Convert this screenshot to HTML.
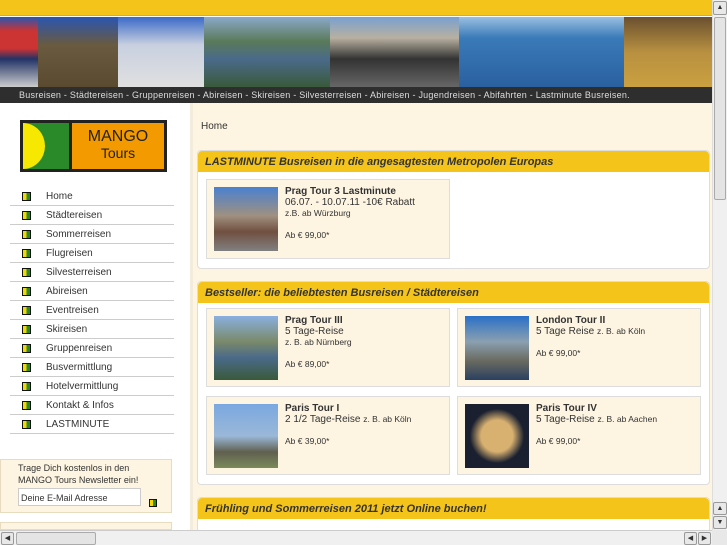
<!DOCTYPE html>
<html><head><meta charset="utf-8"><style>
*{margin:0;padding:0;box-sizing:border-box}
body{width:727px;height:545px;overflow:hidden;position:relative;font-family:"Liberation Sans",sans-serif;background:#fff;color:#333}
.a{position:absolute}
.topbar{left:0;top:0;width:712px;height:16px;background:#f4c41a;border-bottom:1px solid #e0b000}
.banner{left:0;top:17px;width:712px;height:70px;display:flex}
.nav{left:0;top:87px;width:712px;height:16px;background:#2e2e2e;color:#ddd;font-size:9px;line-height:16px;padding-left:19px;white-space:nowrap;letter-spacing:0.24px}
.left{left:0;top:103px;width:190px;height:427px;background:#fff}
.main{left:190px;top:103px;width:522px;height:427px;background:#fdf5e2;border-left:3px solid #f3ebdc}
.logo{left:20px;top:120px;width:147px;height:52px;background:#222;padding:3px}
.menu{left:10px;top:187px;width:164px}
.menu div{height:19px;border-bottom:1px solid #ccc;font-size:10px;line-height:19px;padding-left:36px;position:relative;color:#333}
.menu div:before{content:"";position:absolute;left:12px;top:5px;width:7px;height:7px;background:linear-gradient(90deg,#f4d800 50%,#2a8a2a 50%);border:1px solid #111}
.nl{left:0;top:459px;width:172px;height:54px;background:#fdf5e2;border:1px solid #e8dcc0;font-size:9px;color:#333;padding:2px 0 0 17px;line-height:12px}
.inp{position:absolute;left:17px;top:28px;width:123px;height:18px;border:1px solid #ccc;background:#fff;font-size:9px;padding:3px 2px}
.box{background:#fff;border:1px solid #ddd;border-radius:4px;left:197px;width:513px}
.bh{height:21px;background:#f4c41a;border-radius:4px 4px 0 0;font-weight:bold;font-style:italic;font-size:11px;line-height:22px;padding-left:7px;color:#333}
.item{position:absolute;background:#fdf5e2;border:1px solid #ddd;width:244px}
.item .img{position:absolute;left:7px;top:7px;width:64px;height:64px}
.item .t{position:absolute;left:78px;top:6px;font-size:10px;line-height:11px;width:165px}
.item b{font-size:10px}
.sm{font-size:8.5px}
.vs{left:712px;top:0;width:15px;height:530px;background:#f0f0f0;border-left:1px solid #ddd}
.hs{left:0;top:530px;width:712px;height:15px;background:#f0f0f0;border-top:1px solid #ccc}
.btn{background:#e8e8e8;border:1px solid #999;border-radius:2px;font-size:7px;text-align:center;line-height:12px}
</style></head><body>
<div class="a topbar"></div>
<div class="a banner">
<div style="width:38px;background:linear-gradient(#2a55b0 0,#c33 20%,#c33 45%,#236 60%,#ccc)"></div>
<div style="width:80px;background:linear-gradient(#2a55b0,#6a5a40 40%,#5a4a30)"></div>
<div style="width:86px;background:linear-gradient(#3a6ac8,#c8d0e0 40%,#e0e0e0)"></div>
<div style="width:126px;background:linear-gradient(#8aa8c8,#5a7a5a 35%,#4a6a8a 60%,#3a5a3a)"></div>
<div style="width:129px;background:linear-gradient(#7aa0d0,#b8b0a0 30%,#333 60%,#666)"></div>
<div style="width:165px;background:linear-gradient(#9ac0e0,#3a7ab8 30%,#2a60a0)"></div>
<div style="width:88px;background:linear-gradient(#6a5030,#b89040 50%,#caa040)"></div>
</div>
<div class="a nav">Busreisen - Städtereisen - Gruppenreisen - Abireisen - Skireisen - Silvesterreisen - Abireisen - Jugendreisen - Abifahrten - Lastminute Busreisen.</div>
<div class="a left"></div>
<div class="a main"></div>
<div class="a logo"><div style="display:flex;height:100%"><div style="width:46px;background:#2a8a2a;position:relative;overflow:hidden"><div style="position:absolute;left:-22px;top:0;width:44px;height:46px;border-radius:50%;background:#f6e800"></div></div><div style="width:3px"></div><div style="flex:1;background:#f29a00;color:#222;text-align:center;font-size:16px;line-height:17px;padding-top:5px">MANGO<br><span style="font-size:14px">Tours</span></div></div></div>
<div class="a menu">
<div>Home</div><div>Städtereisen</div><div>Sommerreisen</div><div>Flugreisen</div><div>Silvesterreisen</div><div>Abireisen</div><div>Eventreisen</div><div>Skireisen</div><div>Gruppenreisen</div><div>Busvermittlung</div><div>Hotelvermittlung</div><div>Kontakt &amp; Infos</div><div>LASTMINUTE</div>
</div>
<div class="a nl">Trage Dich kostenlos in den<br>MANGO Tours Newsletter ein!<div class="inp">Deine E-Mail Adresse</div><div style="position:absolute;left:148px;top:39px;width:8px;height:8px;background:linear-gradient(90deg,#f4d800 50%,#2a8a2a 50%);border:1px solid #111"></div></div>
<div class="a" style="left:0;top:522px;width:172px;height:8px;background:#fdf5e2;border:1px solid #e8dcc0"></div>
<div class="a" style="left:201px;top:121px;font-size:10px">Home</div>

<div class="a box" style="top:150px;height:119px"><div class="bh">LASTMINUTE Busreisen in die angesagtesten Metropolen Europas</div>
<div class="item" style="left:8px;top:28px;height:80px"><div class="img" style="background:linear-gradient(#4a80d0,#a09080 45%,#705040 70%,#808080)"></div><div class="t"><b>Prag Tour 3 Lastminute</b><br>06.07. - 10.07.11 -10€ Rabatt<br><span class="sm">z.B. ab Würzburg</span><br><br><span class="sm">Ab € 99,00*</span></div></div></div>

<div class="a box" style="top:281px;height:204px"><div class="bh">Bestseller: die beliebtesten Busreisen / Städtereisen</div>
<div class="item" style="left:8px;top:26px;height:79px"><div class="img" style="background:linear-gradient(#8ab0e0,#7a8a6a 40%,#4a6a8a 65%,#3a5a3a)"></div><div class="t"><b>Prag Tour III</b><br>5 Tage-Reise<br><span class="sm">z. B. ab Nürnberg</span><br><br><span class="sm">Ab € 89,00*</span></div></div>
<div class="item" style="left:259px;top:26px;height:79px"><div class="img" style="background:linear-gradient(#2a70c8,#8aa0b0 40%,#6a6a60 70%,#2a4060)"></div><div class="t"><b>London Tour II</b><br>5 Tage Reise <span class="sm">z. B. ab Köln</span><br><br><span class="sm">Ab € 99,00*</span></div></div>
<div class="item" style="left:8px;top:114px;height:79px"><div class="img" style="background:linear-gradient(#7aa8e0,#9ab8d8 50%,#606050 75%,#7a8a5a)"></div><div class="t"><b>Paris Tour I</b><br>2 1/2 Tage-Reise <span class="sm">z. B. ab Köln</span><br><br><span class="sm">Ab € 39,00*</span></div></div>
<div class="item" style="left:259px;top:114px;height:79px"><div class="img" style="background:radial-gradient(circle at 50% 50%,#d8b070 35%,#1a2030 60%)"></div><div class="t"><b>Paris Tour IV</b><br>5 Tage-Reise <span class="sm">z. B. ab Aachen</span><br><br><span class="sm">Ab € 99,00*</span></div></div></div>

<div class="a box" style="top:497px;height:40px"><div class="bh">Frühling und Sommerreisen 2011 jetzt Online buchen!</div></div>

<div class="a vs"><div class="btn a" style="left:0;top:1px;width:14px;height:14px">▲</div><div class="a" style="left:1px;top:17px;width:12px;height:183px;background:#e4e4e4;border:1px solid #aaa;border-radius:2px"></div><div class="btn a" style="left:0;top:502px;width:14px;height:13px">▲</div><div class="btn a" style="left:0;top:516px;width:14px;height:13px">▼</div></div>
<div class="a hs"><div class="btn a" style="left:1px;top:1px;width:13px;height:13px">◀</div><div class="a" style="left:16px;top:1px;width:80px;height:13px;background:#e4e4e4;border:1px solid #aaa;border-radius:2px"></div><div class="btn a" style="left:684px;top:1px;width:13px;height:13px">◀</div><div class="btn a" style="left:698px;top:1px;width:13px;height:13px">▶</div></div>
<div class="a" style="left:712px;top:530px;width:15px;height:15px;background:#e8e8e8"></div>
</body></html>
